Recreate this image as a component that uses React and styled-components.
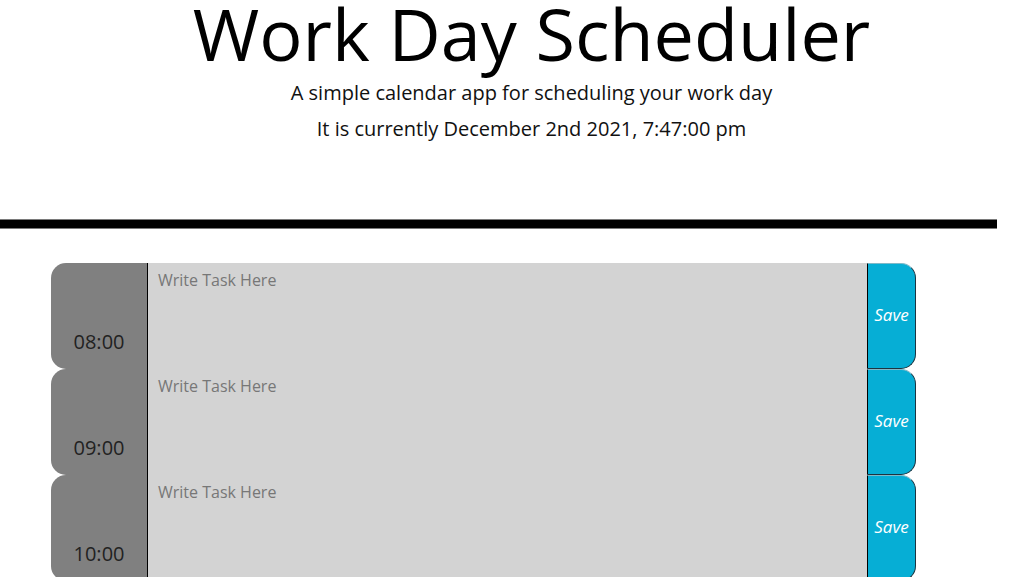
import React, { useState } from "react";
import styled, { createGlobalStyle } from "styled-components";

const GlobalStyle = createGlobalStyle`
  body {
    margin: 0;
    background: #ffffff;
    font-family: "Open Sans", "Liberation Sans", sans-serif;
    color: #000;
    overflow: hidden;
  }
  * { box-sizing: border-box; }
`;

const hours = ["08:00", "09:00", "10:00", "11:00", "12:00", "13:00", "14:00", "15:00", "16:00", "17:00"];

const Scheduler = () => {
  // one entry for each hour, filled by the textarea
  const [tasks, setTasks] = useState({});

  const onChangeHandler = (hour) => (event) => {
    const value = event.target.value;
    setTasks((tasks) => ({ ...tasks, [hour]: value }));
  };

  return (
    <>
      <GlobalStyle />
      <Header>
        <Title>Work Day Scheduler</Title>
        <Lead>A simple calendar app for scheduling your work day</Lead>
        <Lead>It is currently December 2nd 2021, 7:47:00 pm</Lead>
      </Header>
      <Divider />

      <Planner>
        {hours.map((hour) => (
          <Row key={hour}>
            <Hour>{hour}</Hour>
            <Task
              value={tasks[hour] || ""}
              onChange={onChangeHandler(hour)}
              placeholder="Write Task Here"
            />
            <SaveBtn type="button">Save</SaveBtn>
          </Row>
        ))}
      </Planner>
    </>
  );
};

export default Scheduler;

const Header = styled.header`
  padding-left: 38px;
  text-align: center;
  height: 219px;
`;

const Title = styled.h1`
  margin: 0 0 8px;
  font-size: 72px;
  font-weight: 400;
  line-height: 67px;
  color: #000;
`;

const Lead = styled.p`
  margin: 0;
  font-size: 20px;
  line-height: 36px;
  color: #111;
`;

const Divider = styled.div`
  width: 997px;
  height: 10px;
  background: #000;
  border-top: 1px solid #7a7a7a;
  border-bottom: 1px solid #7a7a7a;
`;

const Planner = styled.main`
  width: 865px;
  margin: 34px 0 0 51px;
`;

const Row = styled.div`
  display: flex;
  height: 106px;
`;

const Hour = styled.div`
  width: 96px;
  flex: none;
  display: flex;
  align-items: flex-end;
  justify-content: center;
  padding-bottom: 12px;
  background: #808080;
  border-top-left-radius: 15px;
  border-bottom-left-radius: 15px;
  color: #222;
  font-size: 20px;
  line-height: 30px;
`;

const Task = styled.textarea`
  flex: 1;
  resize: none;
  margin: 0;
  padding: 5px 10px;
  background: #d3d3d3;
  border: none;
  border-left: 1px solid #000;
  font-family: "Open Sans", "Liberation Sans", sans-serif;
  font-size: 16px;
  line-height: 24px;
  color: #333;
  outline: none;

  &::placeholder {
    color: #777;
  }
`;

const SaveBtn = styled.button`
  width: 49px;
  flex: none;
  margin: 0;
  padding: 0 0 4px;
  background: #06aed5;
  color: #fff;
  border: 1px solid #1c3440;
  border-top-color: #7fb9c8;
  border-left-color: #000;
  border-top-right-radius: 15px;
  border-bottom-right-radius: 15px;
  font-family: "Open Sans", "Liberation Sans", sans-serif;
  font-size: 17px;
  font-style: italic;
  cursor: pointer;
`;
